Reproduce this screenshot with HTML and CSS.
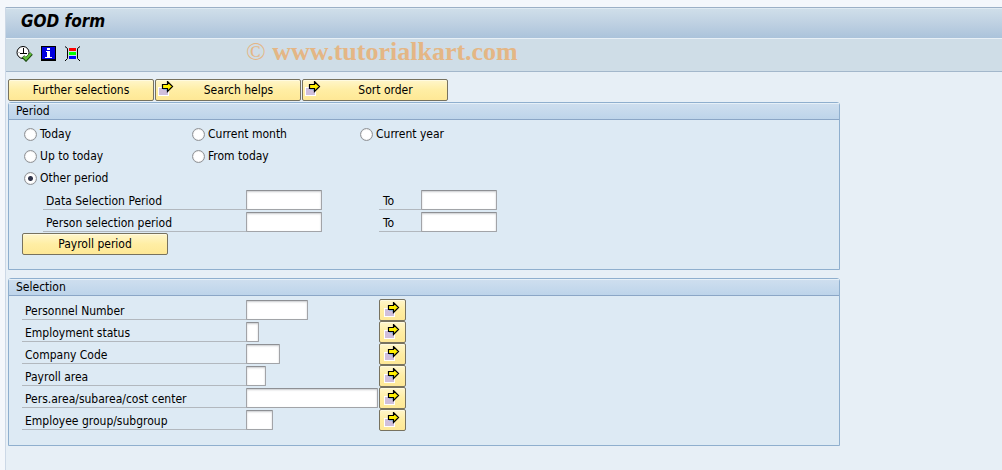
FILE: index.html
```html
<!DOCTYPE html>
<html lang="en">
<head>
<meta charset="utf-8">
<title>GOD form</title>
<link rel="stylesheet" href="styles.css">
</head>
<body>
<svg class="defs" aria-hidden="true">
  <symbol id="arrow" viewBox="0 0 16 16">
    <g shape-rendering="crispEdges">
      <path fill="#fff" d="M0 6h11v9H0z"/>
      <path fill="#d0bfdc" d="M1 7h9v7H1z"/>
      <path fill="#8fb0dc" d="M5 8h4v1H5zM8 9h2v1H8z"/>
    </g>
    <path fill="#ffef00" stroke="#000" stroke-width="1.200" d="M4.500 3.500H9.500V.500L14.500 5.500L9.500 10.500V7.500H4.500z"/>
  </symbol>
</svg>
<div class="window">
  <header class="titlebar"><h1>GOD form</h1></header>
  <div class="toolbar">
    <button class="tool" type="button" aria-label="Execute">
      <svg viewBox="0 0 17 16"><circle cx="7" cy="6.500" r="6" fill="#fff" stroke="#000"/><path d="M7.500 2v5.500M4 7.500h7" fill="none" stroke="#000"/><path d="M2.500 6.500h1M7.500 10v1" fill="none" stroke="#777"/><path d="M7 10.500l3 3 5.500-6" fill="none" stroke="#1d4a12" stroke-width="3.600"/><path d="M7.500 10.500l2.500 2.500 5-5.500" fill="none" stroke="#62c03c" stroke-width="2.200"/></svg>
    </button>
    <button class="tool" type="button" aria-label="Information">
      <svg viewBox="0 0 17 16" shape-rendering="crispEdges"><path fill="#000" d="M1 0h15v15H1z"/><path fill="#0000e0" d="M2 1h13v12H2z"/><path fill="#fff" d="M7 2h3v2H7zM6 5h4v6h2v1H5v-1h2V6H6z"/></svg>
    </button>
    <button class="tool" type="button" aria-label="Colors">
      <svg viewBox="0 0 17 16"><path d="M1 .500l2.500 2v10l-2.500 2.500M16 .500l-2.500 2v10l2.500 2.500" fill="none" stroke="#000"/><path fill="#f00" d="M5 2h7v3H5z"/><path fill="#0f0" d="M5 6h7v3H5z"/><path fill="#00f" d="M5 10h7v3H5z"/></svg>
    </button>
    <div class="watermark"><span class="copy">©</span> www.tutorialkart.com</div>
  </div>
  <main class="content">
    <div class="actions">
      <button class="btn" type="button"><span>Further selections</span></button>
      <button class="btn" type="button"><svg class="arrow"><use href="#arrow"/></svg><span>Search helps</span></button>
      <button class="btn" type="button"><svg class="arrow"><use href="#arrow"/></svg><span>Sort order</span></button>
    </div>

    <section class="group">
      <h2>Period</h2>
      <div class="body">
        <div class="radios">
          <label><input type="radio" name="period">Today</label>
          <label><input type="radio" name="period">Current month</label>
          <label><input type="radio" name="period">Current year</label>
          <label><input type="radio" name="period">Up to today</label>
          <label><input type="radio" name="period">From today</label>
          <label class="first"><input type="radio" name="period" checked>Other period</label>
        </div>
        <div class="row range">
          <label for="data-from">Data Selection Period</label><input class="w76" id="data-from" type="text">
          <label for="data-to">To</label><input class="w76" id="data-to" type="text">
        </div>
        <div class="row range">
          <label for="person-from">Person selection period</label><input class="w76" id="person-from" type="text">
          <label for="person-to">To</label><input class="w76" id="person-to" type="text">
        </div>
        <button class="btn" type="button"><span>Payroll period</span></button>
      </div>
    </section>

    <section class="group">
      <h2>Selection</h2>
      <div class="body">
        <div class="row"><label for="pernr">Personnel Number</label><input class="w62" id="pernr" type="text"><button class="btn more" type="button" aria-label="More personnel numbers"><svg class="arrow"><use href="#arrow"/></svg></button></div>
        <div class="row"><label for="status">Employment status</label><input class="w13" id="status" type="text"><button class="btn more" type="button" aria-label="More employment statuses"><svg class="arrow"><use href="#arrow"/></svg></button></div>
        <div class="row"><label for="company">Company Code</label><input class="w34" id="company" type="text"><button class="btn more" type="button" aria-label="More company codes"><svg class="arrow"><use href="#arrow"/></svg></button></div>
        <div class="row"><label for="payroll">Payroll area</label><input class="w20" id="payroll" type="text"><button class="btn more" type="button" aria-label="More payroll areas"><svg class="arrow"><use href="#arrow"/></svg></button></div>
        <div class="row"><label for="area">Pers.area/subarea/cost center</label><input class="w132" id="area" type="text"><button class="btn more" type="button" aria-label="More areas"><svg class="arrow"><use href="#arrow"/></svg></button></div>
        <div class="row"><label for="egroup">Employee group/subgroup</label><input class="w27" id="egroup" type="text"><button class="btn more" type="button" aria-label="More employee groups"><svg class="arrow"><use href="#arrow"/></svg></button></div>
      </div>
    </section>
  </main>
</div>
</body>
</html>
```
FILE: styles.css
```css
* { box-sizing: border-box; }
body {
  margin: 0;
  padding: 7px 0 0 5px;
  min-height: 100vh;
  display: flex;
  background: #f4f7fb;
  color: #000;
  font: 12px/18px "DejaVu Sans Condensed", "Noto Sans", sans-serif;
}
button, input { font: inherit; color: inherit; margin: 0; }
.defs { position: absolute; width: 0; height: 0; }
.window { flex: 1; min-width: 0; background: #e7eff6; border-left: 1px solid #ccd8e6; }
.titlebar {
  height: 32px;
  padding-left: 15px;
  display: flex;
  align-items: center;
  border-top: 1px solid #9cb0c6;
  border-bottom: 1px solid #e8f0f6;
  background: linear-gradient(#d0dfea, #bfd1e2 50%, #abc3db);
  box-shadow: inset 0 1px #dfeaf2;
}
h1 { margin: 0; padding-bottom: 4px; font-size: 17px; line-height: 20px; font-style: italic; font-weight: bold; }
.toolbar {
  position: relative;
  height: 33px;
  padding: 7px 0 0 10px;
  display: flex;
  gap: 7px;
  background: #cfdde7;
  border-bottom: 1px solid #a3b7cb;
}
.tool { width: 17px; height: 16px; padding: 0; border: 0; background: none; }
.tool svg { display: block; width: 17px; height: 16px; }
.watermark {
  position: absolute;
  left: 240px;
  top: -2px;
  color: #e4b685;
  font: bold 26px/30px "Liberation Serif", serif;
  white-space: nowrap;
}
.copy { font-weight: normal; }
.content { padding: 7px 0 0 2px; }
.actions { display: flex; gap: 1px; margin-bottom: 1px; }
.btn {
  display: flex;
  align-items: center;
  width: 146px;
  height: 22px;
  padding: 0 2px;
  border: 1px solid #77725f;
  border-radius: 2px;
  background: linear-gradient(#fff6cb, #ffeea4 50%, #fee896);
  box-shadow: inset 0 1px #fffae0;
}
.btn span { flex: 1; text-align: center; }
.btn .arrow + span { padding-left: 5px; }
.arrow { width: 16px; height: 16px; flex: none; }
.actions .arrow { margin-bottom: 2px; }
.more { width: 27px; padding: 0 4px 1px; }
.group {
  max-width: 832px;
  border: 1px solid #8fafce;
  border-radius: 3px 3px 0 0;
  background: #ddeaf4;
}
.group + .group { margin-top: 8px; }
h2 {
  margin: 0;
  padding-left: 7px;
  height: 17px;
  font-size: 12px;
  line-height: 16px;
  font-weight: normal;
  border-bottom: 1px solid #8ba6c6;
  background: linear-gradient(#cfdfef, #bdd4ea);
  box-shadow: inset 0 1px #e6f0f8;
}
.body { padding: 3px 13px 14px; }
.radios { display: grid; grid-template-columns: repeat(3, 168px); grid-auto-rows: 22px; }
.radios label { display: flex; align-items: center; gap: 3px; padding-left: 2px; }
.radios .first { grid-column: 1; }
.radios input {
  appearance: none;
  width: 13px;
  height: 13px;
  border: 1px solid #8f9296;
  border-radius: 50%;
  background: #fff;
  box-shadow: inset 0 0 1px #aaa;
}
.radios input:checked { background: radial-gradient(circle, #30344a 2px, #fff 3px); }
.row { display: grid; grid-template-columns: 224px 133px 27px; height: 22px; align-items: center; }
.row label { height: 20px; padding: 2px 0 0 3px; line-height: 18px; border-bottom: 1px solid #b2b8be; }
.row input {
  height: 20px;
  padding: 0 2px;
  border: 1px solid #a2a4a8;
  border-top-color: #8e9094;
  border-radius: 1px;
  background: #fff;
  box-shadow: inset 0 1px 2px #c8cacd;
}
.range { grid-template-columns: 203px 133px 42px 76px; padding-left: 21px; }
.range label { padding-left: 4px; }
.range label:first-child { padding-left: 3px; }
.w13 { width: 13px; }
.w20 { width: 20px; }
.w27 { width: 27px; }
.w34 { width: 34px; }
.w62 { width: 62px; }
.w76 { width: 76px; }
.w132 { width: 132px; }
.row .w13 { padding: 0; }
```
